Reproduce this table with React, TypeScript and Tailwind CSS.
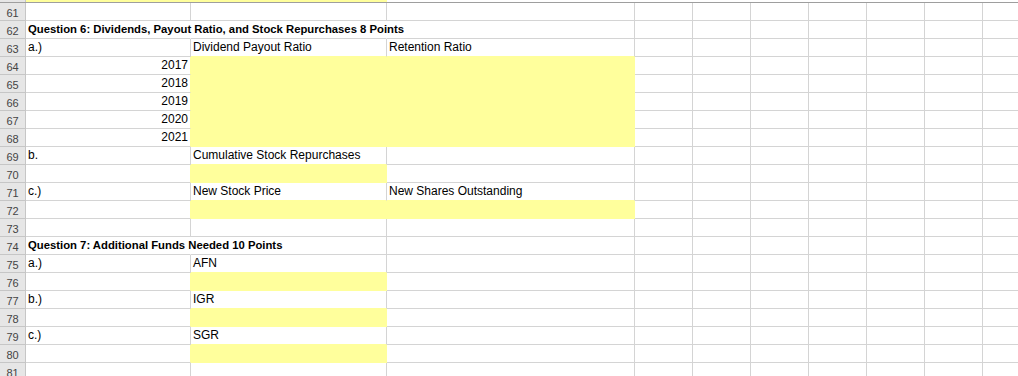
import React from 'react';

type Cell = {
  text?: string;
  bold?: boolean;
  right?: boolean;
  yellow?: boolean;
  spill?: boolean; // text runs over the right gridline
};

type Row = { n: number; cells: Cell[] };

const YEARS = ['2017', '2018', '2019', '2020', '2021'];

const COL_W = [
  'w-[165px]',
  'w-[196px]',
  'w-[248px]',
  'w-[58px]',
  'w-[58px]',
  'w-[58px]',
  'w-[58px]',
  'w-[58px]',
  'w-[58px]',
  'w-[58px]',
];

const ROWS: Row[] = [
  { n: 61, cells: [] },
  { n: 62, cells: [{ text: 'Question 6: Dividends, Payout Ratio, and Stock Repurchases 8 Points', bold: true, spill: true }, { spill: true }] },
  { n: 63, cells: [{ text: 'a.)' }, { text: 'Dividend Payout Ratio' }, { text: 'Retention Ratio' }] },
  ...YEARS.map((y, i) => ({
    n: 64 + i,
    cells: [{ text: y, right: true }, { yellow: true }, { yellow: true }],
  })),
  { n: 69, cells: [{ text: 'b.' }, { text: 'Cumulative Stock Repurchases' }] },
  { n: 70, cells: [{}, { yellow: true }] },
  { n: 71, cells: [{ text: 'c.)' }, { text: 'New Stock Price' }, { text: 'New Shares Outstanding' }] },
  { n: 72, cells: [{}, { yellow: true }, { yellow: true }] },
  { n: 73, cells: [] },
  { n: 74, cells: [{ text: 'Question 7: Additional Funds Needed 10 Points', bold: true, spill: true }] },
  { n: 75, cells: [{ text: 'a.)' }, { text: 'AFN' }] },
  { n: 76, cells: [{}, { yellow: true }] },
  { n: 77, cells: [{ text: 'b.)' }, { text: 'IGR' }] },
  { n: 78, cells: [{}, { yellow: true }] },
  { n: 79, cells: [{ text: 'c.)' }, { text: 'SGR' }] },
  { n: 80, cells: [{}, { yellow: true }] },
  { n: 81, cells: [] },
];

function cellAt(r: number, c: number): Cell {
  return ROWS[r]?.cells[c] ?? {};
}

function SheetCell({ r, c }: { r: number; c: number }) {
  const cell = cellAt(r, c);
  const rightYellow = cell.yellow || cellAt(r, c + 1).yellow;
  const bottomYellow = cell.yellow || cellAt(r + 1, c).yellow;

  return (
    <div
      className={`${COL_W[c]} shrink-0 h-[18px] border-r border-b leading-[17px] px-[2px] whitespace-nowrap ${
        cell.yellow ? 'bg-[#ffff9c]' : ''
      } ${cell.spill ? 'border-r-transparent' : rightYellow ? 'border-r-[#ffff9c]' : 'border-r-[#d4d4d4]'} ${
        bottomYellow ? 'border-b-[#ffff9c]' : 'border-b-[#d4d4d4]'
      } ${cell.right ? 'text-right' : ''} ${cell.bold ? 'font-bold text-[11.3px]' : 'text-[12px]'}`}
    >
      {cell.text}
    </div>
  );
}

export default function App() {
  return (
    <div className="w-[1018px] h-[376px] overflow-hidden bg-white text-black font-['Liberation_Sans',Arial,sans-serif]">
      {/* partial row 60 */}
      <div className="flex h-[3px] border-b border-[#9e9e9e]">
        <div className="w-[26px] shrink-0 bg-[#e6e6e6] border-r border-[#c6c6c6]" />
        <div className="w-[361px] shrink-0 bg-[#ffff9c]" />
      </div>

      {ROWS.map((row, r) => (
        <div key={row.n} className="flex h-[18px]">
          <div className="w-[26px] shrink-0 h-[18px] bg-[#e6e6e6] border-r border-b border-[#c6c6c6] text-center text-[11px] leading-[17px] pt-[2px] text-[#444]">
            {row.n}
          </div>
          {COL_W.map((_, c) => (
            <SheetCell key={c} r={r} c={c} />
          ))}
        </div>
      ))}
    </div>
  );
}
